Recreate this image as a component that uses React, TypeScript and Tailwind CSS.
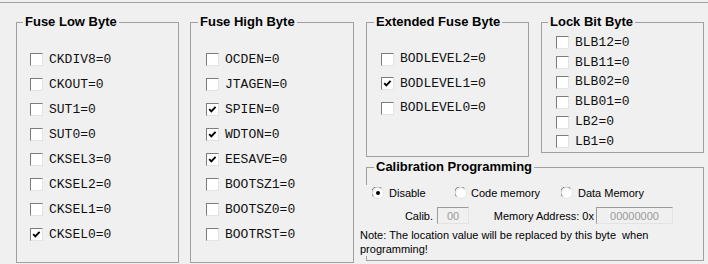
import React from 'react';

type Bit = { name: string; checked?: boolean };

const lowBits: Bit[] = [
  { name: 'CKDIV8=0' },
  { name: 'CKOUT=0' },
  { name: 'SUT1=0' },
  { name: 'SUT0=0' },
  { name: 'CKSEL3=0' },
  { name: 'CKSEL2=0' },
  { name: 'CKSEL1=0' },
  { name: 'CKSEL0=0', checked: true },
];

const highBits: Bit[] = [
  { name: 'OCDEN=0' },
  { name: 'JTAGEN=0' },
  { name: 'SPIEN=0', checked: true },
  { name: 'WDTON=0', checked: true },
  { name: 'EESAVE=0', checked: true },
  { name: 'BOOTSZ1=0' },
  { name: 'BOOTSZ0=0' },
  { name: 'BOOTRST=0' },
];

const extBits: Bit[] = [
  { name: 'BODLEVEL2=0' },
  { name: 'BODLEVEL1=0', checked: true },
  { name: 'BODLEVEL0=0' },
];

const lockBits: Bit[] = [
  { name: 'BLB12=0' },
  { name: 'BLB11=0' },
  { name: 'BLB02=0' },
  { name: 'BLB01=0' },
  { name: 'LB2=0' },
  { name: 'LB1=0' },
];

const CheckBox: React.FC<{ checked?: boolean }> = ({ checked }) => (
  <div className="w-[13px] h-[13px] shrink-0 bg-white border border-t-[#7c7c7c] border-l-[#7c7c7c] border-r-[#e3e3e3] border-b-[#e3e3e3]">
    {checked && (
      <svg width="11" height="11" viewBox="0 0 11 11" className="block">
        <path d="M2.2 5.2 L4.3 7.4 L8.6 2.8" fill="none" stroke="#000" strokeWidth="1.9" />
      </svg>
    )}
  </div>
);

const Radio: React.FC<{ checked?: boolean }> = ({ checked }) => (
  <svg width="12" height="12" viewBox="0 0 12 12" className="shrink-0">
    <circle cx="6" cy="6" r="5.5" fill="#fff" stroke="#e3e3e3" />
    <path d="M1.3 9.4 A5.5 5.5 0 0 1 9.4 1.3" fill="none" stroke="#7c7c7c" />
    {checked && <circle cx="6" cy="6" r="2" fill="#000" />}
  </svg>
);

const Legend: React.FC<{ title: string; ml?: string }> = ({ title, ml = 'ml-[7px]' }) => (
  <legend className={`${ml} px-[2px] font-bold text-[13px] leading-[16px]`}>{title}</legend>
);

const BitList: React.FC<{ bits: Bit[]; row: string }> = ({ bits, row }) => (
  <div className="flex flex-col">
    {bits.map((b) => (
      <div key={b.name} className={`flex items-center gap-[6px] ${row}`}>
        <CheckBox checked={b.checked} />
        <span className="font-['Liberation_Mono','Courier_New',monospace] text-[13px] leading-[14px] text-[#111]">{b.name}</span>
      </div>
    ))}
  </div>
);

const SunkenInput: React.FC<{ value: string; w: string }> = ({ value, w }) => (
  <div
    className={`${w} h-[17px] flex items-center justify-center bg-[#f0f0f0] border border-t-[#9a9a9a] border-l-[#9a9a9a] border-r-[#e3e3e3] border-b-[#e3e3e3] text-[#9a9a9a] text-[11px]`}
  >
    {value}
  </div>
);

export default function App() {
  return (
    <div className="w-[708px] h-[264px] bg-[#f0f0f0] overflow-hidden font-['Liberation_Sans',Arial,sans-serif] text-black">
      <div className="mt-[2px] border-t border-[#a0a0a0] flex items-start pl-[16px] pt-[11px]">
        <fieldset className="w-[163px] h-[249px] border border-[#a0a0a0]">
          <Legend title="Fuse Low Byte" ml="ml-[6px]" />
          <div className="pl-[13px] pt-[17px]">
            <BitList bits={lowBits} row="h-[25px]" />
          </div>
        </fieldset>

        <fieldset className="ml-[11px] w-[164px] h-[249px] border border-[#a0a0a0]">
          <Legend title="Fuse High Byte" />
          <div className="pl-[15px] pt-[17px]">
            <BitList bits={highBits} row="h-[25px]" />
          </div>
        </fieldset>

        <div className="ml-[12px] w-[338px] flex flex-col">
          <div className="flex items-start">
            <fieldset className="w-[163px] h-[143px] border border-[#a0a0a0]">
              <Legend title="Extended Fuse Byte" />
              <div className="pl-[14px] pt-[17px]">
                <BitList bits={extBits} row="h-[24.5px]" />
              </div>
            </fieldset>
            <fieldset className="ml-[12px] w-[163px] h-[139px] border border-[#a0a0a0]">
              <Legend title="Lock Bit Byte" ml="ml-[6px]" />
              <div className="pl-[14px] pt-[3px]">
                <BitList bits={lockBits} row="h-[19.8px]" />
              </div>
            </fieldset>
          </div>

          <fieldset className="mt-[2px] w-[338px] h-[102px] border border-[#a0a0a0]">
            <Legend title="Calibration Programming" />
            <div className="-ml-[7px] mt-[10px] bg-[#f0f0f0] text-[11px] leading-[14px]">
              <div className="flex items-center h-[16px] pl-[12px]">
                <div className="w-[83px] flex items-center gap-[5px]">
                  <Radio checked />
                  <span>Disable</span>
                </div>
                <div className="w-[106px] flex items-center gap-[4px]">
                  <Radio />
                  <span>Code memory</span>
                </div>
                <div className="flex items-center gap-[5px]">
                  <Radio />
                  <span>Data Memory</span>
                </div>
              </div>
              <div className="flex items-center mt-[6px]">
                <span className="w-[73px] text-right">Calib.</span>
                <div className="ml-[4px]">
                  <SunkenInput value="00" w="w-[32px]" />
                </div>
                <span className="w-[125px] text-right">Memory Address: 0x</span>
                <div className="ml-[2px]">
                  <SunkenInput value="00000000" w="w-[77px]" />
                </div>
              </div>
              <div className="mt-[4px] whitespace-pre">
                {'Note: The location value will be replaced by this byte  when'}
                <br />
                {'programming!'}
              </div>
            </div>
          </fieldset>
        </div>
      </div>
    </div>
  );
}
